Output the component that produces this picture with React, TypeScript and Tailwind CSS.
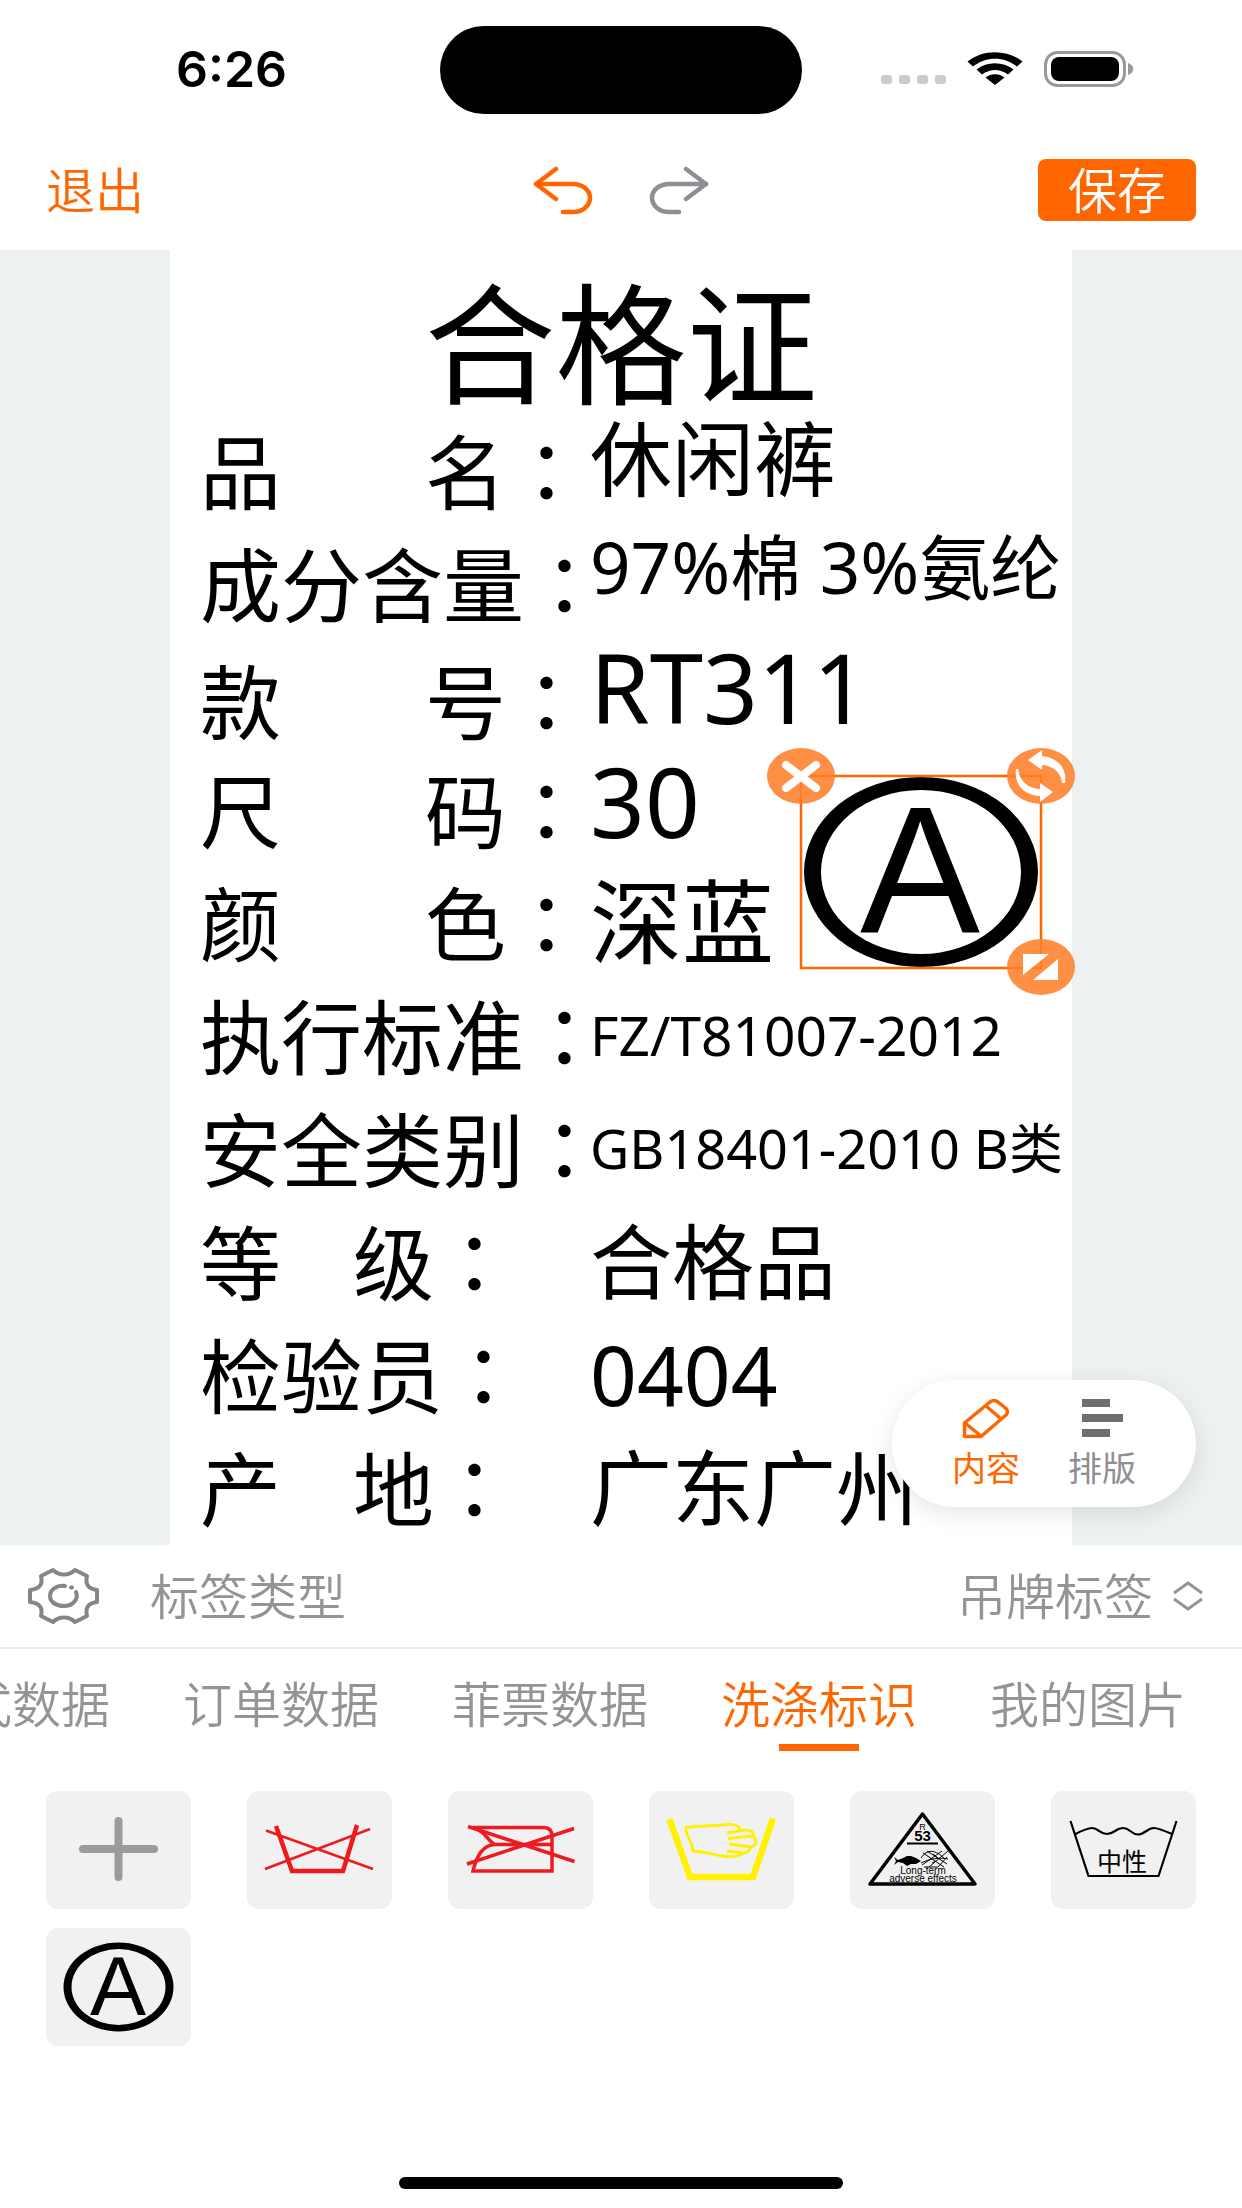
import type { ReactNode } from "react";

type LabelRow = {
  label: string[];
  gap: string;
  value: string;
  size: string;
};

const labelRows: LabelRow[] = [
  { label: ["品", "名"], gap: "gap-36", value: "休闲裤", size: "text-[82px] pb-6" },
  { label: ["成分含量"], gap: "gap-0", value: "97%棉 3%氨纶", size: "text-[71px] pb-8" },
  { label: ["款", "号"], gap: "gap-36", value: "RT311", size: "text-[96px] pb-6" },
  { label: ["尺", "码"], gap: "gap-36", value: "30", size: "text-[96px] pb-4" },
  { label: ["颜", "色"], gap: "gap-36", value: "深蓝", size: "text-[92px]" },
  { label: ["执行标准"], gap: "gap-0", value: "FZ/T81007-2012", size: "text-[55px]" },
  { label: ["安全类别"], gap: "gap-0", value: "GB18401-2010 B类", size: "text-[54px]" },
  { label: ["等", "级"], gap: "gap-[72px]", value: "合格品", size: "text-[82px]" },
  { label: ["检验员"], gap: "gap-0", value: "0404", size: "text-[82px]" },
  { label: ["产", "地"], gap: "gap-[72px]", value: "广东广州", size: "text-[82px]" }
];

const tabs = ["款式数据", "订单数据", "菲票数据", "洗涤标识", "我的图片"];

function StatusBar() {
  return (
    <div className="grid h-[130px] grid-cols-3 items-start">
      <div className="flex h-[138px] items-center pl-[176px] font-['Inter',sans-serif] text-[50px] font-semibold">
        6:26
      </div>
      <div className="mt-[26px] h-22 w-[362px] justify-self-center rounded-full bg-black" />
      <div className="flex h-[138px] items-center justify-end gap-5 pr-[108px]">
        <div className="flex gap-[7px] pt-5">
          {[0, 1, 2, 3].map((dot) => (
            <span key={dot} className="h-[9px] w-[11px] rounded-[3px] bg-[#cbcbcb]" />
          ))}
        </div>
        <svg width="58" height="34" viewBox="0 0 56 34" aria-hidden="true">
          <path d="M0.500 9.500C16 -3 40 -3 55.500 9.500L50 14.500C37 4 19 4 6 14.500Z" />
          <path d="M9.500 17.500C20 9 36 9 46.500 17.500L41 22.500C33 16.500 23 16.500 15 22.500Z" />
          <path d="M18.500 25.500C24 21 32 21 37.500 25.500L28 33Z" />
        </svg>
        <svg width="90" height="36" viewBox="0 0 90 36" aria-hidden="true">
          <rect x="1.500" y="1.500" width="79" height="33" rx="12" fill="none" stroke="#999" strokeWidth="3" />
          <rect x="7" y="6" width="68" height="24" rx="8" />
          <path d="M84 12C91 14 91 22 84 24Z" fill="#999" />
        </svg>
      </div>
    </div>
  );
}

function TurnArrow({ className }: { className?: string }) {
  return (
    <svg
      width="60"
      height="50"
      viewBox="0 0 60 50"
      fill="none"
      stroke="currentColor"
      strokeWidth="4.500"
      strokeLinecap="round"
      strokeLinejoin="round"
      className={className}
      aria-hidden="true"
    >
      <path d="M23 4L3 19L23 34" />
      <path d="M3 19H40A17 14 0 0 1 40 47H30" />
    </svg>
  );
}

function TopBar() {
  return (
    <header className="grid h-[120px] grid-cols-3 items-center px-[46px]">
      <button type="button" className="justify-self-start pb-1 text-[49px] leading-[58px] text-[#ff6600]">
        退出
      </button>
      <div className="flex items-center gap-14 justify-self-center">
        <button type="button" aria-label="撤销" className="text-[#ff6600]">
          <TurnArrow />
        </button>
        <button type="button" aria-label="重做" className="text-[#8e8e93]">
          <TurnArrow className="-scale-x-100" />
        </button>
      </div>
      <button
        type="button"
        className="w-[158px] justify-self-end rounded-lg bg-[#ff6600] pb-1 text-[49px] leading-[58px] text-white"
      >
        保存
      </button>
    </header>
  );
}

function SelectedSymbol() {
  return (
    <svg className="absolute top-[490px] left-[594px]" width="314" height="264" viewBox="0 0 314 264" aria-label="A">
      <path
        fillRule="evenodd"
        d="M40 132A117 95 0 0 1 274 132A117 95 0 0 1 40 132ZM57 132A100 82 0 0 0 257 132A100 82 0 0 0 57 132Z"
      />
      <text x="156" y="192" textAnchor="middle" fontSize="180" fontFamily="Liberation Sans, sans-serif">
        A
      </text>
      <rect x="37" y="36" width="240" height="192" fill="none" stroke="#ff6600" strokeWidth="2.500" />
      <g fill="#ff7f2a" fillOpacity="0.88">
        <ellipse cx="37" cy="36" rx="34" ry="28" />
        <ellipse cx="277" cy="36" rx="34" ry="28" />
        <ellipse cx="277" cy="227" rx="34" ry="28" />
      </g>
      <path d="M22 25L52 48M52 25L22 48" stroke="#fff" strokeWidth="8" strokeLinecap="round" />
      <g fill="#fff">
        <path d="M264 20L278 10V16C294 18 303 28 301 43H298C297 32 289 26 278 25V30Z" />
        <path d="M252 29C250 45 260 55 276 56V62L289 52L276 43V49C264 48 256 42 254 29Z" />
        <path d="M259 214H285L259 235ZM294 219V240H269Z" />
      </g>
    </svg>
  );
}

function LabelCanvas() {
  return (
    <main className="relative bg-[#edf1f2]">
      <section
        aria-label="标签"
        className="relative mx-auto max-w-[902px] bg-white pb-0.5 font-['Noto_Sans','Noto_Sans_CJK_SC',sans-serif] whitespace-nowrap text-black"
      >
        <h1 className="flex h-[163px] items-center justify-center pt-6 text-[131px] leading-none">合格证</h1>
        <dl>
          {labelRows.map((row) => (
            <div key={row.value} className="grid h-[113px] grid-cols-[390px_1fr] items-center pl-[30px]">
              <dt className={`flex items-baseline text-[81px] leading-none ${row.gap}`}>
                {row.label.map((part, i) => (
                  <span key={part}>
                    {part}
                    {i === row.label.length - 1 && <span className="font-['Noto_Sans_CJK_TC',sans-serif]">：</span>}
                  </span>
                ))}
              </dt>
              <dd className={`leading-none ${row.size}`}>{row.value}</dd>
            </div>
          ))}
        </dl>
        <SelectedSymbol />
      </section>

      <nav
        aria-label="模式"
        className="absolute right-[46px] bottom-[38px] flex w-[304px] justify-center gap-12 rounded-full bg-white pt-[18px] pb-4 shadow-[0_6px_24px_rgba(0,0,0,0.10)]"
      >
        <button type="button" className="flex flex-col items-center gap-1 text-[34px] leading-[48px] text-[#ff6600]">
          <svg
            width="48"
            height="41"
            viewBox="0 0 48 41"
            fill="none"
            stroke="currentColor"
            strokeWidth="3.500"
            strokeLinejoin="round"
            aria-hidden="true"
          >
            <path d="M2.500 38.500V25L28 4Q32 1 36 4L44 10.500Q47 13.500 44 17L19 38.500Z" />
            <path d="M24 8L38 20M3 25L19 38" />
          </svg>
          内容
        </button>
        <button type="button" className="flex flex-col items-center gap-1 text-[34px] leading-[48px] text-[#8e8e93]">
          <svg width="41" height="41" viewBox="0 0 41 41" fill="#6e6e6e" aria-hidden="true">
            <path d="M0 1H28V9H0ZM0 16H41V24H0ZM0 31H28V39H0Z" />
          </svg>
          排版
        </button>
      </nav>
    </main>
  );
}

function GearIcon() {
  return (
    <svg
      width="74"
      height="58"
      viewBox="0 0 74 58"
      fill="none"
      stroke="#868686"
      strokeWidth="4"
      strokeLinecap="round"
      strokeLinejoin="round"
      aria-hidden="true"
    >
      <path d="M26 3C32 9 42 9 48 3L60 9C58 17 61 22 70 23V35C61 36 58 41 60 49L48 55C42 49 32 49 26 55L14 49C16 41 13 36 3 35V23C13 22 16 17 14 9Z" />
      <path d="M38 19C29 18 23 23 23 29C23 35 29 39 37 39C45 39 52 33 49 25" />
      <path d="M44 20.500H45" />
    </svg>
  );
}

function TypeRow() {
  return (
    <div className="flex h-[104px] items-center border-b-2 border-[#ebebeb] pr-[38px] pl-[27px] text-[49px] text-[#949494]">
      <button type="button" aria-label="设置">
        <GearIcon />
      </button>
      <label htmlFor="label-type" className="ml-[49px] pb-1 leading-[60px]">
        标签类型
      </label>
      <select id="label-type" className="ml-auto appearance-none bg-transparent pb-1 leading-[60px]">
        <option>吊牌标签</option>
      </select>
      <svg
        className="ml-[18px]"
        width="32"
        height="30"
        viewBox="0 0 32 30"
        fill="none"
        stroke="currentColor"
        strokeWidth="3"
        aria-hidden="true"
      >
        <path d="M2 12L16 2L30 12M2 18L16 28L30 18" />
      </svg>
    </div>
  );
}

function Tabs() {
  return (
    <div role="tablist" className="flex justify-end gap-[73px] overflow-hidden pt-5 pr-[56px] text-[49px] leading-[66px]">
      {tabs.map((tab) => {
        const active = tab === "洗涤标识";
        return (
          <button
            key={tab}
            type="button"
            role="tab"
            aria-selected={active}
            className={`flex shrink-0 flex-col items-center gap-[9px] ${active ? "text-[#ff6600]" : "text-[#949494]"}`}
          >
            {tab}
            <span className={`h-[7px] w-20 ${active ? "bg-[#ff6600]" : ""}`} />
          </button>
        );
      })}
    </div>
  );
}

function Tile({ label, children }: { label: string; children: ReactNode }) {
  return (
    <button type="button" aria-label={label} className="rounded-xl bg-[#f1f1f1]">
      <svg className="h-[118px] w-full" viewBox="0 0 145 118" fill="none">
        {children}
      </svg>
    </button>
  );
}

function SymbolGrid() {
  return (
    <div className="grid grid-cols-6 gap-x-14 gap-y-[19px] px-[46px] pt-10 font-normal">
      <Tile label="添加">
        <path d="M37 58H108M72.500 30V86" stroke="#9b9b9b" strokeWidth="8" strokeLinecap="round" />
      </Tile>
      <Tile label="不可水洗">
        <g stroke="#ef1a20">
          <path d="M29 35L45 80H96L110 34" strokeWidth="4.500" />
          <path d="M19 39.500L126 78M18 78L123 38" strokeWidth="2.500" />
        </g>
      </Tile>
      <Tile label="不可熨烫">
        <g stroke="#ef1a20" strokeWidth="3.500">
          <path d="M25 36.500H96Q104 37 104 45V80H25C29 64 35 54 47 53.500C39 50 38 40 25 36.500M47 53.500H104" />
          <path d="M20 35.500L126.500 70.500M19 73L126 37.500" />
        </g>
      </Tile>
      <Tile label="手洗">
        <g stroke="#fff200">
          <path d="M20.500 28L41 86H104L124 27.500" strokeWidth="6.500" />
          <path
            d="M78 42L93 39.500C102 38 106 42 104 45C109 50 107 55 102 56C100 61 97 62 94 62C90 66 80 66 73 65C66 64 60 61 43.500 60C45 51 36 46 37 36.500C50 35 65 35 80 33.500C87 33 91 36 91 39M79 47.500L104 45M80 53L102 56M78 60L94 62"
            strokeWidth="2.800"
            strokeLinejoin="round"
          />
        </g>
      </Tile>
      <Tile label="R53 Long-term adverse effects">
        <path d="M72.500 23L20 93H125Z" stroke="#000" strokeWidth="3.500" strokeLinejoin="round" />
        <g fill="#000" fontFamily="Liberation Sans, sans-serif" textAnchor="middle">
          <text x="72.500" y="39" fontSize="9">
            R
          </text>
          <text x="72.500" y="50" fontSize="15" fontWeight="700">
            53
          </text>
          <text x="73" y="83" fontSize="10">
            Long-term
          </text>
          <text x="73" y="91" fontSize="10">
            adverse effects
          </text>
        </g>
        <path d="M57 52.500H88" stroke="#000" strokeWidth="2" />
        <path
          d="M44 66L48 69L53 67L57 65H61L66 67L71 70L66 73H61L57 75L53 72L48 71L44 74L46 70Z"
          fill="#000"
        />
        <path
          d="M71 67C77 58 85 58 95 68M73 62L94 76M77 60L97 73M72 74L92 60M79 76L98 60M71 72C79 68 89 66 98 68M74 76H88L97 66M83 63L88 67M82 72L86 70"
          stroke="#000"
        />
      </Tile>
      <Tile label="中性洗涤">
        <path d="M19.500 30L37.500 85H107.500L125.500 30" stroke="#000" strokeWidth="2.200" />
        <path
          d="M23.500 43.500Q36 37 41 37C48 37 48 43 56 43C64 43 64 37 72 37C79 37 80 43.500 87 43.500C94 43.500 96 37 103 37Q107 37 121 43"
          stroke="#000"
          strokeWidth="2.200"
        />
        <text x="71" y="80" fontSize="25" textAnchor="middle" fill="#000">
          中性
        </text>
      </Tile>
      <Tile label="A">
        <path
          fill="#000"
          fillRule="evenodd"
          d="M17.500 59A55 44.500 0 0 1 127.500 59A55 44.500 0 0 1 17.500 59ZM25.500 59A47 38 0 0 0 119.500 59A47 38 0 0 0 25.500 59Z"
        />
        <text x="72" y="87" fontSize="84" fontFamily="Liberation Sans, sans-serif" textAnchor="middle" fill="#000">
          A
        </text>
      </Tile>
    </div>
  );
}

export default function App() {
  return (
    <div className="flex min-h-screen flex-col bg-white font-['Noto_Sans_CJK_SC',sans-serif] font-[350] text-black">
      <StatusBar />
      <TopBar />
      <div className="font-normal">
        <LabelCanvas />
      </div>
      <TypeRow />
      <Tabs />
      <SymbolGrid />
      <div className="mx-auto mt-auto mb-[19px] h-3 w-[444px] rounded-full bg-black" />
    </div>
  );
}
